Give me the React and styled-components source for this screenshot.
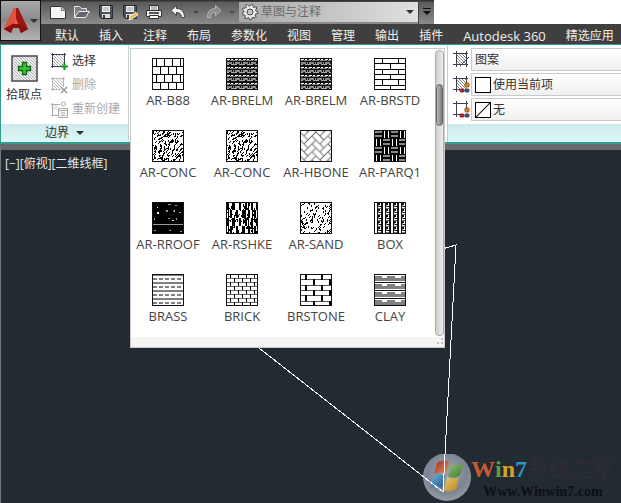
import React, { useId } from "react";
import styled, { createGlobalStyle } from "styled-components";

const TABS = ["默认", "插入", "注释", "布局", "参数化", "视图", "管理", "输出", "插件", "Autodesk 360", "精选应用"];

const PATTERNS = [
  "AR-B88", "AR-BRELM", "AR-BRELM", "AR-BRSTD",
  "AR-CONC", "AR-CONC", "AR-HBONE", "AR-PARQ1",
  "AR-RROOF", "AR-RSHKE", "AR-SAND", "BOX",
  "BRASS", "BRICK", "BRSTONE", "CLAY",
];

const App = () => {
  return (
    <Page>
      <GlobalStyle />
      <Header>
        <AppButton aria-label="Application menu">
          <LogoIcon />
          <Caret />
        </AppButton>
        <TitleRow>
          <QuickAccess>
            <ToolButton aria-label="New"><NewIcon /></ToolButton>
            <ToolButton aria-label="Open"><OpenIcon /></ToolButton>
            <ToolButton aria-label="Save"><SaveIcon /></ToolButton>
            <ToolButton aria-label="Save as"><SaveIcon pencil /></ToolButton>
            <ToolButton aria-label="Print"><PrintIcon /></ToolButton>
            <ToolButton aria-label="Undo"><ArrowIcon /></ToolButton>
            <ToolButton $narrow aria-label="Undo list"><Caret $small /></ToolButton>
            <ToolButton aria-label="Redo"><ArrowIcon redo /></ToolButton>
            <ToolButton $narrow aria-label="Redo list"><Caret $small /></ToolButton>
            <Workspace>
              <GearIcon />
              <WorkspaceSelect aria-label="Workspace">
                <option>草图与注释</option>
              </WorkspaceSelect>
              <Caret />
            </Workspace>
            <CustomizeButton aria-label="Customize">
              <svg width="8" height="8" fill="#111">
                <path d="M0 0h8v1H0zM0 3h8L4 7z" />
              </svg>
            </CustomizeButton>
          </QuickAccess>
        </TitleRow>
        <TabBar>
          {TABS.map((tab) => (
            <Tab key={tab} $latin={/^[A-Z]/.test(tab)}>{tab}</Tab>
          ))}
        </TabBar>
      </Header>

      <Ribbon>
        <Panel>
          <BoundaryBody>
            <PickButton>
              <PickIcon />
              拾取点
            </PickButton>
            <ActionList>
              <Action><SelectIcon />选择</Action>
              <Action disabled><RemoveIcon />删除</Action>
              <Action disabled><RecreateIcon />重新创建</Action>
            </ActionList>
          </BoundaryBody>
          <PanelFooter>边界<Caret /></PanelFooter>
        </Panel>

        <GalleryPanel>
          <Gallery>
            <GalleryBody>
              <SwatchGrid>
                {PATTERNS.map((name, i) => (
                  <Swatch key={i}>
                    <Hatch name={name} />
                    {name}
                  </Swatch>
                ))}
              </SwatchGrid>
              <ScrollTrack>
                <ScrollThumb />
              </ScrollTrack>
            </GalleryBody>
            <GalleryFooter>
              <svg width="8" height="8" fill="#c4c0bc">
                <path d="M5 1h2v2H5zM1 5h2v2H1zM5 5h2v2H5z" />
              </svg>
            </GalleryFooter>
          </Gallery>
        </GalleryPanel>

        <Panel>
          <PropertyBody>
            <Property>
              <PropertyIcon hatch slash />
              <Field>
                <FieldSelect aria-label="Hatch type"><option>图案</option></FieldSelect>
              </Field>
            </Property>
            <Property>
              <PropertyIcon hatch colors />
              <Field>
                <ColorBox />
                <FieldSelect aria-label="Hatch color"><option>使用当前项</option></FieldSelect>
              </Field>
            </Property>
            <Property>
              <PropertyIcon colors />
              <Field>
                <ColorBox>
                  <svg width="14" height="14"><path d="M0 14L14 0" stroke="#222" strokeWidth="1.2" /></svg>
                </ColorBox>
                <FieldSelect aria-label="Background color"><option>无</option></FieldSelect>
              </Field>
            </Property>
          </PropertyBody>
          <PanelFooter />
        </Panel>
      </Ribbon>

      <Viewport>
        <ViewLabel>[−][俯视][二维线框]</ViewLabel>
        <Watermark>
          <OrbIcon />
          <SiteName>
            <SiteTitle>
              <Letter $color="#c95a34">W</Letter>
              <Letter $color="#5d9a43">i</Letter>
              <Letter $color="#d3a32c">n</Letter>
              <Letter $color="#2e93c4">7</Letter>
              <SiteSuffix>系统之家</SiteSuffix>
            </SiteTitle>
            <SiteUrl>Www.Winwin7.com</SiteUrl>
          </SiteName>
        </Watermark>
        <Drawing>
          <path d="M400 111L456 95L443 342L259 198" fill="none" stroke="#fff" shapeRendering="crispEdges" />
        </Drawing>
      </Viewport>
    </Page>
  );
};

export default App;

/* hatch previews, each on a 32px square */

const scatter = (count, seed) => {
  let s = seed;
  const next = () => {
    s = (s * 16807) % 2147483647;
    return s / 2147483647;
  };
  for (let i = 0; i < 5; i++) next();
  return Array.from({ length: count }, () => [Math.floor(next() * 31), Math.floor(next() * 31), next()]);
};

const strokes = (points, tall) =>
  points.map(([x, y, r]) => (r < 0.5 ? `M${x} ${y}h1v${tall}h-1z` : `M${x + 1} ${y}h1v1h-1v${tall - 1}h-1v${1 - tall}h1z`)).join("");

const courses = (pitch, step, width, offset) => {
  const out = [];
  for (let row = 0; row * pitch < 32; row++) {
    const start = row % 2 ? offset[1] : offset[0];
    for (let x = start; x < 32; x += step) {
      out.push(`M${x} ${Math.round(row * pitch)}h${width}v${Math.ceil(pitch)}h${-width}z`);
    }
  }
  return out.join("");
};

const lines = (pitch, thick) => {
  let d = "";
  for (let y = 0; y < 32; y += pitch) d += `M0 ${Math.round(y)}h32v${thick}h-32z`;
  return d;
};

const TILES = {
  "AR-BRELM": {
    w: 8, h: 8,
    art: (
      <>
        <path fill="#111" d="M0 0h8v8H0z" />
        <path fill="#888" d="M0 2h3v1H0zM4 2h4v1H4zM1 4h5v2H1zM7 4h1v2H7z" />
        <path fill="#fff" d="M1 1h3v1H1zM5 1h2v1H5z" />
        <path fill="#aaa" d="M0 6h3v1H0zM5 6h3v1H5z" />
      </>
    ),
  },
  "AR-HBONE": {
    w: 16, h: 16, transform: "rotate(45) scale(1.41) translate(1 1)",
    art: (
      <path
        fill="none" stroke="#707070" strokeWidth="0.7"
        d="M0 0h8v4H0zM4 4h8v4H4zM8 8h8v4H8zM12 12h8v4h-8zM-4 12h8v4h-8zM12 0h4v8h-4zM0 4h4v8H0zM4 8h4v8H4zM8 12h4v8H8zM8 -4h4v8H8z"
      />
    ),
  },
  "AR-PARQ1": {
    w: 16, h: 16,
    art: (
      <>
        <path fill="#000" d="M0 0h16v16H0z" />
        <path fill="#888" d="M1 1h7v2H1zM1 5h7v2H1zM9 9h7v2H9zM9 13h7v2H9z" />
        <path fill="#fff" d="M10 1h1v7h-1zM14 1h1v7h-1zM2 9h1v7H2zM6 9h1v7H6z" />
      </>
    ),
  },
  BOX: {
    w: 8, h: 6,
    art: (
      <>
        <path fill="#111" d="M0 0h1v6H0zM3 0h1v6H3zM7 0h1v6H7zM4 1h2v2H4zM5 4h2v1H5z" />
        <path fill="#777" d="M4 0h3v1H4zM4 3h1v2H4z" />
      </>
    ),
  },
  BRASS: { w: 6, h: 8, art: <path fill="#808080" d="M0 0h6v2H0zM1 4h4v2H1z" /> },
  CLAY: {
    w: 32, h: 8,
    art: (
      <>
        <path fill="#808080" d="M0 2h32v5H0z" />
        <path fill="#fff" d="M8 2h5v2H8zM21 2h6v2h-6z" />
        <path fill="#111" d="M0 0h32v1H0z" />
      </>
    ),
  },
};

const PATHS = {
  "AR-B88": <path d={lines(8, 1) + courses(8, 8, 1, [4, 8])} />,
  "AR-BRSTD": <path d={lines(5.34, 1) + courses(5.34, 16, 1, [8, 16])} />,
  "AR-CONC": <path d={strokes(scatter(190, 71), 2)} />,
  "AR-SAND": <path d={strokes(scatter(105, 23), 2)} />,
  "AR-RSHKE": (
    <path d={courses(8, 6, 2, [1, 4]) + courses(8, 8, 1, [6, 2]) + strokes(scatter(75, 12), 3)} />
  ),
  "AR-RROOF": (
    <>
      <path d="M0 0h32v32H0z" />
      <path fill="#999" d="M1 22h30v1H1zM16 2h3v1h-3zM23 3h2v1h-2zM14 8h2v2h-2zM21 9h2v1h-2zM27 10h2v1h-2zM16 16h2v1h-2zM2 28h2v1H2zM17 28h2v1h-2zM28 29h2v1h-2zM24 16h1v2h-1zM2 16h1v2H2z" />
      <path fill="#eee" d="M5 10h2v2H5zM20 18h2v1h-2zM22 8h1v1h-1zM5 5h1v1H5z" />
    </>
  ),
  BRICK: (
    <>
      <path fill="#666" d={lines(4, 1)} />
      <path d={courses(4, 8, 1, [4, 8])} />
    </>
  ),
  BRSTONE: (
    <>
      <path fill="#555" d={lines(5.34, 1)} />
      <path d={courses(5.34, 16, 2, [5, 13])} />
    </>
  ),
};

const Hatch = ({ name }) => {
  const id = useId();
  const tile = TILES[name];
  return (
    <svg width="32" height="32" viewBox="0 0 32 32" shapeRendering={name === "AR-HBONE" ? "auto" : "crispEdges"}>
      {tile && (
        <pattern id={id} width={tile.w} height={tile.h} patternUnits="userSpaceOnUse" patternTransform={tile.transform}>
          {tile.art}
        </pattern>
      )}
      {tile ? <rect width="32" height="32" fill={`url(#${id})`} /> : PATHS[name]}
      <rect x="0.5" y="0.5" width="31" height="31" fill="none" stroke="#111" />
    </svg>
  );
};

/* icons */

const LogoIcon = () => (
  <svg width="24" height="26" viewBox="0 0 24 26">
    <path d="M10 0h4l10 21-7 4-2-5H9l-2 5-7-4z" fill="#c3281b" />
    <path d="M10 0h2v14l-4 2-8 5z" fill="#e2513d" />
    <path d="M14 0l10 21-7 4-2-9-3-2V0z" fill="#a31510" />
    <path d="M0 21l9-5 6 0 9 5-7 4-2-5H9l-2 5z" fill="#8b0f0c" />
    <path d="M12 10l2 6h-4z" fill="#d9695a" />
  </svg>
);

const NewIcon = () => (
  <svg width="18" height="16" viewBox="0 0 18 16">
    <path d="M1.5 2.5h11l4 4v8h-15z" fill="#f6f6f6" stroke="#333" />
    <path d="M12.5 2.5v4h4" fill="#ccc" stroke="#777" />
  </svg>
);

const OpenIcon = () => (
  <svg width="18" height="16" viewBox="0 0 18 16">
    <path d="M1.500 13.500v-11h5l2 2h5v3" fill="#7c8085" stroke="#e6e6e6" />
    <path d="M1.500 13.500l4-6h11l-4 6z" fill="#62676d" stroke="#f0f0f0" />
  </svg>
);

const SaveIcon = ({ pencil }) => (
  <svg width="18" height="18" viewBox="0 0 18 18">
    <path d="M2.5 2.5h13v13h-11l-2-2z" fill="#49525e" stroke="#222a33" />
    <path d="M5 3h8v6H5z" fill="#f2f2f2" />
    <path d="M6 5h6M6 7h6" stroke="#999" />
    <path d="M5 11h8v4H5z" fill="#ddd" />
    <path d="M6 12h2v3H6z" fill="#333" />
    {pencil && <path d="M8 17l1-4 6-4 2 3-6 4z" fill="#e9bd58" stroke="#fff" strokeWidth="0.7" />}
  </svg>
);

const PrintIcon = () => (
  <svg width="18" height="16" viewBox="0 0 18 16">
    <path d="M4.5 1.5h9v6h-9z" fill="#fff" stroke="#333" />
    <path d="M6 3h6M6 5h6" stroke="#777" />
    <path d="M1.5 6.5h15v6h-15z" fill="#f2f2f2" stroke="#333" />
    <path d="M4 9h10" stroke="#555" strokeWidth="2" />
    <path d="M4.5 11.5h9v3h-9z" fill="#fff" stroke="#333" />
  </svg>
);

const ArrowIcon = ({ redo }) => (
  <svg width="16" height="16" viewBox="0 0 16 16">
    <path
      transform={redo ? "translate(16 0) scale(-1 1)" : undefined}
      d="M6.500 1.500v3c5 0 8 3 8 9h-3c0-3.500-2-5-5-5v3L1 6.500z"
      fill={redo ? "#8c8c8c" : "#f4f4f4"}
      stroke={redo ? "#b8b8b8" : "#444"}
    />
  </svg>
);

const GEAR_POINTS = Array.from({ length: 36 }, (_, i) => {
  const angle = (i / 36) * Math.PI * 2;
  const radius = i % 4 < 2 ? 8 : 6;
  return `${9 + radius * Math.cos(angle)},${9 + radius * Math.sin(angle)}`;
}).join(" ");

const GearIcon = () => (
  <svg width="18" height="18" viewBox="0 0 18 18" stroke="#4a4a4a">
    <polygon points={GEAR_POINTS} fill="#ececec" strokeLinejoin="round" />
    <circle cx="9" cy="9" r="3" fill="#c4c4c4" />
  </svg>
);

const HatchLines = ({ x, y, size, color = "#777" }) => {
  const id = useId();
  return (
    <>
      <pattern id={id} width="3" height="3" patternUnits="userSpaceOnUse">
        <path d="M-1 -1l5 5M-1 2l2 2M2 -1l2 2" stroke={color} strokeWidth="0.9" />
      </pattern>
      <rect x={x} y={y} width={size} height={size} fill={`url(#${id})`} stroke="none" />
    </>
  );
};

const PickIcon = () => (
  <svg width="27" height="27" viewBox="0 0 27 27">
    <rect x="1" y="1" width="25" height="25" fill="#eee" />
    <HatchLines x={1} y={1} size={25} color="#aaa" />
    <rect x="1" y="1" width="25" height="25" fill="none" stroke="#484850" strokeWidth="1.5" />
    <path d="M11.5 7.5h4v4h4v4h-4v4h-4v-4h-4v-4h4z" fill="#35c735" stroke="#14651a" strokeWidth="1.3" />
  </svg>
);

const SelectIcon = () => (
  <svg width="17" height="17" viewBox="0 0 17 17">
    <HatchLines x={1} y={1} size={13} color="#999" />
    <path d="M0 1.5h15M1.5 0v15M13.5 0v11M0 13.5h10" stroke="#3a4252" fill="none" />
    <path d="M13.5 10v7M10 13.5h7" stroke="#159a1b" strokeWidth="2" />
  </svg>
);

const RemoveIcon = () => (
  <svg width="17" height="17" viewBox="0 0 17 17">
    <HatchLines x={1} y={1} size={12} color="#bbb" />
    <path d="M0 1.5h14M1.5 0v14M12.5 0v10M0 12.5h9" stroke="#bbb" fill="none" />
    <path d="M10 10l6 6M16 10l-6 6" stroke="#999" strokeWidth="1.5" />
  </svg>
);

const RecreateIcon = () => (
  <svg width="17" height="17" viewBox="0 0 17 17" fill="none" stroke="#aaa">
    <HatchLines x={1} y={3} size={6} color="#bbb" />
    <path d="M0 3.5h9M1.5 2v13M0 14.5h7" />
    <circle cx="12.5" cy="3" r="2" />
    <path d="M7.5 7.5h9v9h-9zM7.5 9.5h9M10 12h4M10 14.5h4" fill="#f4f4f4" />
  </svg>
);

const PropertyIcon = ({ hatch, slash, colors }) => (
  <svg width="17" height="17" viewBox="0 0 17 17" fill="none">
    {hatch && <HatchLines x={3} y={3} size={11} color="#777" />}
    <path d="M0 2.5h15M3.5 0v16M13.5 0v9M0 13.5h8" stroke="#3a4252" />
    {slash && <path d="M8 13.5h7M13.5 8v8M7 15L16 6" stroke="#3a4252" />}
    {colors && (
      <>
        <rect x="12" y="7" width="4" height="4" rx="1" fill="#e08a2d" stroke="#8f5211" />
        <rect x="7" y="13" width="4" height="3" rx="1" fill="#b8283c" stroke="#7d1626" />
        <rect x="12" y="13" width="4" height="3" rx="1" fill="#41598f" stroke="#263962" />
      </>
    )}
  </svg>
);

const OrbIcon = () => (
  <svg width="48" height="48" viewBox="0 0 48 48">
    <defs>
      <radialGradient id="orb" cx="0.5" cy="0.4" r="0.6">
        <stop offset="0" stopColor="#9ba4b1" />
        <stop offset="0.7" stopColor="#7d8592" />
        <stop offset="1" stopColor="#959ca6" />
      </radialGradient>
      <linearGradient id="red" x2="1" y2="1"><stop stopColor="#a82e1c" /><stop offset="1" stopColor="#df9060" /></linearGradient>
      <linearGradient id="green" x2="1" y2="1"><stop stopColor="#9abd72" /><stop offset="1" stopColor="#397c2c" /></linearGradient>
      <linearGradient id="blue" x2="1" y2="1"><stop stopColor="#76b5d8" /><stop offset="1" stopColor="#17528d" /></linearGradient>
      <linearGradient id="yellow" x2="1" y2="1"><stop stopColor="#e9cc74" /><stop offset="1" stopColor="#bd811c" /></linearGradient>
    </defs>
    <path d="M17 1h14a24 24 0 1 1-14 0z" fill="url(#orb)" />
    <path d="M14 10c5-3 8-3 12-1l-3 12c-4-2-8-2-12 0z" fill="url(#red)" />
    <path d="M28 11c4 2 8 2 13-1l-4 12c-4 3-8 3-12 1z" fill="url(#green)" />
    <path d="M10 23c5-2 8-2 12 0l-3 12c-4-2-7-2-12 1z" fill="url(#blue)" />
    <path d="M24 24c4 2 8 2 12 0l-3 12c-5 3-8 3-12 1z" fill="url(#yellow)" />
  </svg>
);

const GlobalStyle = createGlobalStyle`
  * {
    box-sizing: border-box;
  }
  body {
    margin: 0;
    background: #fff;
    font-family: "Open Sans", "Noto Sans CJK SC", sans-serif;
    font-size: 12px;
    line-height: 16px;
    color: #333;
  }
  button, select {
    margin: 0;
    padding: 0;
    border: 0;
    background: none;
    color: inherit;
    font: inherit;
  }
  select {
    appearance: none;
    outline: none;
  }
  svg {
    flex-shrink: 0;
  }
`;

const Page = styled.div`
  min-height: 100vh;
  display: flex;
  flex-direction: column;
  overflow: hidden;
`;

const Header = styled.header`
  display: grid;
  grid-template-columns: 41px 1fr;
  grid-template-rows: 24px 20px;
  background: linear-gradient(#fff 24px, #3f3f3f 24px);
`;

const Caret = styled.span`
  border: ${(p) => (p.$small ? 3 : 4)}px solid transparent;
  border-top-color: ${(p) => (p.$small ? "#484848" : "#333")};
  border-bottom: 0;
`;

const AppButton = styled.button`
  grid-row: 1 / 3;
  display: flex;
  align-items: center;
  justify-content: center;
  gap: 2px;
  margin-bottom: 3px;
  border: 1px solid #111;
  background: linear-gradient(#a8a8a8, #8a8a8a 50%, #b4b4b4);
`;

const TitleRow = styled.div`
  display: flex;
`;

const QuickAccess = styled.div`
  display: flex;
  align-items: center;
  padding-left: 5px;
  background: linear-gradient(#333 1px, #5a5a5a 2px, #8c8c8c);
`;

const ToolButton = styled.button`
  width: ${(p) => (p.$narrow ? 12 : 24)}px;
  height: 20px;
  display: flex;
  align-items: center;
  justify-content: center;
`;

const Workspace = styled.div`
  width: 179px;
  height: 20px;
  display: flex;
  align-items: center;
  gap: 2px;
  margin-left: 1px;
  padding: 0 4px 0 2px;
  background: linear-gradient(90deg, #a8a8a8, #e0e0e0);
`;

const WorkspaceSelect = styled.select`
  flex: 1;
  color: #6c6c6c;
`;

const CustomizeButton = styled.button`
  width: 16px;
  align-self: stretch;
  border-left: 1px solid #444;
`;

const TabBar = styled.nav`
  display: flex;
  align-items: center;
  gap: 20px;
  padding: 3px 0 0 14px;
  overflow: hidden;
`;

const Tab = styled.button`
  flex-shrink: 0;
  font-size: ${(p) => (p.$latin ? 13 : 12)}px;
  color: #f0f0f0;
  white-space: nowrap;
`;

const Ribbon = styled.section`
  display: grid;
  grid-template-columns: 128px 319px 1fr;
  border: solid #2e9c8e;
  border-width: 1px 0 2px 1px;
  background: #fff;
`;

const Panel = styled.div`
  display: flex;
  flex-direction: column;
  border-right: 1px solid #c8d4d4;

  &:last-child {
    border-right: 0;
  }
`;

const BoundaryBody = styled.div`
  height: 79px;
  display: flex;
  gap: 9px;
  padding: 4px 0 0 5px;
`;

const PickButton = styled.button`
  display: flex;
  flex-direction: column;
  align-items: center;
  gap: 5px;
  align-self: flex-start;
  padding-top: 6px;
`;

const ActionList = styled.div`
  display: flex;
  flex-direction: column;
`;

const Action = styled.button`
  height: 24px;
  display: flex;
  align-items: center;
  gap: 4px;

  &:disabled {
    color: #aaa;
  }
`;

const PanelFooter = styled.div`
  height: 18px;
  display: flex;
  align-items: center;
  justify-content: center;
  gap: 7px;
  background: linear-gradient(#cde9e9, #dcf8f6);
`;

const GalleryPanel = styled.div`
  position: relative;
  border-right: 1px solid #b6d0d0;
`;

const Gallery = styled.div`
  position: absolute;
  z-index: 1;
  top: 3px;
  left: 1px;
  right: 2px;
  border: 1px solid #c6c9cd;
  background: #fff;
`;

const GalleryBody = styled.div`
  display: flex;
`;

const SwatchGrid = styled.div`
  flex: 1;
  display: grid;
  grid-template-columns: repeat(4, 74px);
  grid-auto-rows: 72px;
  padding-top: 9px;
  height: 288px;
`;

const Swatch = styled.button`
  height: 50px;
  display: flex;
  flex-direction: column;
  align-items: center;
  gap: 2px;
  font-size: 13px;
  color: #444;
  white-space: nowrap;
`;

const ScrollTrack = styled.div`
  width: 9px;
  margin: 1px 0;
  padding-top: 33px;
  border: 1px solid #aaa;
  border-radius: 4px;
  background: linear-gradient(90deg, #cfcfcf, #ececec);
`;

const ScrollThumb = styled.div`
  height: 42px;
  border: 1px solid #666;
  border-radius: 4px;
  background: linear-gradient(90deg, #b8b8b8, #7c7c7c);
`;

const GalleryFooter = styled.div`
  height: 10px;
  display: flex;
  justify-content: flex-end;
  background: #f4f4f4;
`;

const PropertyBody = styled.div`
  height: 79px;
  display: flex;
  flex-direction: column;
  gap: 2px;
  padding: 3px 0 0 5px;
`;

const Property = styled.div`
  height: 23px;
  display: flex;
  align-items: center;
  gap: 1px;
`;

const Field = styled.div`
  flex: 1;
  height: 23px;
  display: flex;
  align-items: center;
  gap: 2px;
  padding-left: 3px;
  border: 1px solid #c9c9c9;
  border-right: 0;
  background: linear-gradient(#fff, #f0f0f0);
`;

const FieldSelect = styled.select`
  flex: 1;
`;

const ColorBox = styled.span`
  width: 16px;
  height: 16px;
  display: flex;
  border: 1px solid #000;
  background: #fff;
`;

const Viewport = styled.main`
  position: relative;
  flex: 1;
  border-top: 6px solid #666a6c;
  border-left: 1px solid #777;
  background: #222a32;
`;

const ViewLabel = styled.div`
  padding: 6px 4px;
  color: #e8e8e8;
`;

const Drawing = styled.svg`
  position: absolute;
  top: 0;
  left: -1px;
  width: 100%;
  height: 100%;
`;

const Watermark = styled.div`
  position: absolute;
  right: 6px;
  bottom: 2px;
  display: flex;
  align-items: flex-end;
`;

const SiteName = styled.div`
  display: flex;
  flex-direction: column;
  align-items: center;
  font-family: "Liberation Serif", "Noto Sans CJK SC", serif;
  font-weight: bold;
`;

const SiteTitle = styled.div`
  display: flex;
  align-items: center;
  height: 28px;
  font-size: 24px;
`;

const Letter = styled.span`
  color: ${(p) => p.$color};
`;

const SiteSuffix = styled.span`
  font-size: 22px;
  color: #2b2d31;
`;

const SiteUrl = styled.div`
  font-size: 14px;
  line-height: 18px;
  color: #0c1016;
`;
